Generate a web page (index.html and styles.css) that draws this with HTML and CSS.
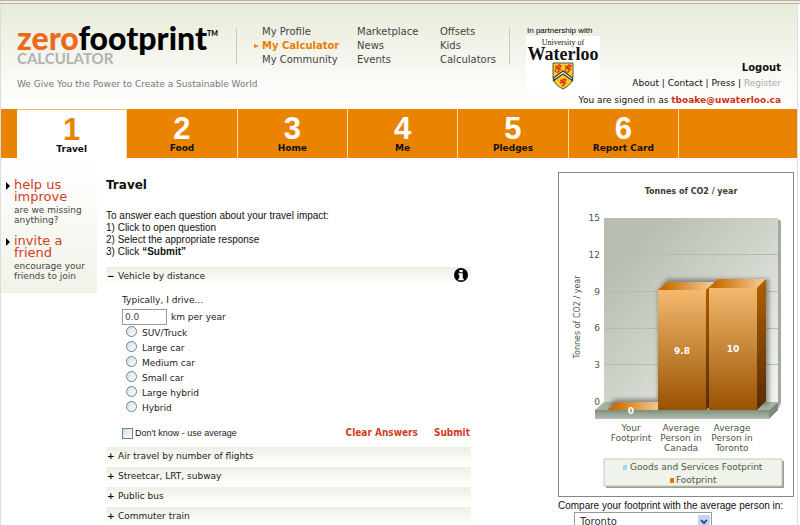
FILE: index.html
```html
<!DOCTYPE html>
<html lang="en">
<head>
<meta charset="utf-8">
<title>Zerofootprint Calculator</title>
<link rel="stylesheet" href="styles.css">
</head>
<body>
<div class="strip"></div>
<div class="page">
  <header class="header">
    <div class="brand">
      <div class="logo"><span class="logo-zero">zero</span>footprint<sup class="tm">TM</sup></div>
      <div class="logo-sub">CALCULATOR</div>
      <p class="tagline">We Give You the Power to Create a Sustainable World</p>
    </div>
    <nav class="links" aria-label="Site">
      <ul>
        <li><a href="#">My Profile</a></li>
        <li class="current"><a href="#">My Calculator</a></li>
        <li><a href="#">My Community</a></li>
      </ul>
      <ul>
        <li><a href="#">Marketplace</a></li>
        <li><a href="#">News</a></li>
        <li><a href="#">Events</a></li>
      </ul>
      <ul>
        <li><a href="#">Offsets</a></li>
        <li><a href="#">Kids</a></li>
        <li><a href="#">Calculators</a></li>
      </ul>
    </nav>
    <div class="partner">
      <p class="partner-note">In partnership with</p>
      <div class="partner-card">
        <span class="uni">University of</span>
        <span class="uni-name">Waterloo</span>
        <svg class="crest" viewBox="0 0 22 28" aria-hidden="true">
          <path d="M1 1H21V14C21 20 17 24 11 27C5 24 1 20 1 14Z" fill="#f7cf1c" stroke="#555" stroke-width="1"/>
          <path d="M1.500 16L11 9L20.500 16V18.500L11 12L1.500 18.500Z" fill="#fff" stroke="#333" stroke-width="1.200"/>
          <path d="M3 4l2 1 2-2 2 1-2 2 2 2M3 7l3-1 1 3-2 2M4 10l-1-2M13 4l2 1 2-2 2 1-2 2 2 2M13 7l3-1 1 3-2 2M14 10l-1-2M8 18l2 1 2-2 2 1-2 2 2 2M8 21l3-1 1 3-2 1" fill="none" stroke="#dc3a20" stroke-width="1.500"/>
        </svg>
      </div>
    </div>
    <div class="account">
      <a class="logout" href="#">Logout</a>
      <p class="account-links"><a href="#">About</a> | <a href="#">Contact</a> | <a href="#">Press</a> | <a class="muted" href="#">Register</a></p>
      <p class="signed">You are signed in as <a href="#">tboake@uwaterloo.ca</a></p>
    </div>
  </header>

  <nav class="tabbar" aria-label="Steps">
    <div class="tabs">
      <a class="tab active" href="#"><span class="num">1</span>Travel</a>
      <a class="tab" href="#"><span class="num">2</span>Food</a>
      <a class="tab" href="#"><span class="num">3</span>Home</a>
      <a class="tab" href="#"><span class="num">4</span>Me</a>
      <a class="tab" href="#"><span class="num">5</span>Pledges</a>
      <a class="tab" href="#"><span class="num">6</span>Report Card</a>
    </div>
  </nav>

  <div class="columns">
    <aside class="side">
      <section class="promo">
        <h2><a href="#">help us improve</a></h2>
        <p>are we missing anything?</p>
      </section>
      <section class="promo">
        <h2><a href="#">invite a friend</a></h2>
        <p>encourage your friends to join</p>
      </section>
    </aside>

    <main class="main">
      <h1>Travel</h1>
      <div class="intro">
        <p>To answer each question about your travel impact:</p>
        <p>1) Click to open question</p>
        <p>2) Select the appropriate response</p>
        <p>3) Click <b>“Submit”</b></p>
      </div>
      <button class="question open" type="button"><span class="sign">−</span>Vehicle by distance
        <svg class="info" viewBox="0 0 14 14" aria-hidden="true"><circle cx="7" cy="7" r="7"/><path d="M5.300 2h3.400v2.200H5.300zM4.300 5.200h4.400v5.300h1v1.700H4.300v-1.700h1V6.800h-1z" fill="#fff"/></svg>
      </button>
      <form class="form">
        <label for="distance">Typically, I drive...</label>
        <div class="distance"><input id="distance" class="amount" type="text" value="0.0"><span>km per year</span></div>
        <div class="choices">
          <label><input type="radio" name="car">SUV/Truck</label>
          <label><input type="radio" name="car">Large car</label>
          <label><input type="radio" name="car">Medium car</label>
          <label><input type="radio" name="car">Small car</label>
          <label><input type="radio" name="car">Large hybrid</label>
          <label><input type="radio" name="car">Hybrid</label>
        </div>
        <div class="actions">
          <label class="unknown"><input type="checkbox">Don't know - use average</label>
          <button type="reset">Clear Answers</button>
          <button type="submit">Submit</button>
        </div>
      </form>
      <div class="questions">
        <button class="question" type="button"><span class="sign">+</span>Air travel by number of flights</button>
        <button class="question" type="button"><span class="sign">+</span>Streetcar, LRT, subway</button>
        <button class="question" type="button"><span class="sign">+</span>Public bus</button>
        <button class="question" type="button"><span class="sign">+</span>Commuter train</button>
      </div>
    </main>

    <aside class="results">
      <svg class="chart" viewBox="0 0 234 323" role="img" aria-label="Tonnes of CO2 per year">
        <defs>
          <linearGradient id="wall" x1="0" y1="0" x2="1" y2="1"><stop offset="0.150" stop-color="#b7bdb1"/><stop offset="1" stop-color="#f1f4ef"/></linearGradient>
          <linearGradient id="front" x1="0" y1="0" x2="0" y2="1"><stop offset="0" stop-color="#f3b96e"/><stop offset="1" stop-color="#995200"/></linearGradient>
          <linearGradient id="flank" x1="0" y1="0" x2="0" y2="1"><stop offset="0" stop-color="#b06000"/><stop offset="1" stop-color="#552c00"/></linearGradient>
          <linearGradient id="cap" x1="0" y1="0" x2="1" y2="0"><stop offset="0.100" stop-color="#c76c00"/><stop offset="1" stop-color="#f8cf9c"/></linearGradient>
          <linearGradient id="base" x1="0" y1="0" x2="0" y2="1"><stop offset="0" stop-color="#7f8e7f"/><stop offset="1" stop-color="#b3c0b0"/></linearGradient>
          <filter id="soft" x="-20%" y="-20%" width="140%" height="140%"><feGaussianBlur stdDeviation="2"/></filter>
        </defs>
        <text class="chart-title" x="132" y="21">Tonnes of CO2 / year</text>
        <path d="M219 46l3 2V230l-3 6z" fill="#a5aaa1"/>
        <rect x="45" y="45" width="174" height="185" fill="url(#wall)"/>
        <path d="M45 81.500H219M45 118.500H219M45 155.500H219M45 191.500H219" stroke="#b1bfa0"/>
        <path d="M36 237L45 229H219L210 237Z" fill="#a8b4a5"/>
        <rect x="36" y="237" width="174" height="9" fill="url(#base)"/>
        <path d="M210 237L219 229V237L210 246Z" fill="#7d8a79"/>
        <path d="M99 118L108 106H210V232H99ZM48 234L56 226H104V234Z" fill="#555" opacity="0.600" filter="url(#soft)"/>
        <path d="M48 237L58 229H104L99 237Z" fill="url(#cap)"/>
        <rect x="99" y="117" width="48" height="120" fill="url(#front)"/>
        <path d="M99 117L108 109H156L147 117Z" fill="url(#cap)"/>
        <path d="M147 117L156 109V229L147 237Z" fill="url(#flank)"/>
        <rect x="150" y="115" width="48" height="122" fill="url(#front)"/>
        <path d="M150 115L159 106H207L198 115Z" fill="url(#cap)"/>
        <path d="M198 115L207 106V228L198 237Z" fill="url(#flank)"/>
        <g class="scale">
          <text x="41" y="48">15</text><text x="41" y="85">12</text><text x="41" y="122">9</text>
          <text x="41" y="158">6</text><text x="41" y="195">3</text><text x="41" y="232">0</text>
        </g>
        <text class="axis-title" x="-144" y="21" transform="rotate(-90)">Tonnes of CO2 / year</text>
        <g class="values"><text x="72" y="241">0</text><text x="123" y="181">9.8</text><text x="174" y="179">10</text></g>
        <g class="names">
          <text x="72" y="258">Your</text><text x="72" y="268">Footprint</text>
          <text x="122" y="258">Average</text><text x="122" y="268">Person in</text><text x="122" y="278">Canada</text>
          <text x="173" y="258">Average</text><text x="173" y="268">Person in</text><text x="173" y="278">Toronto</text>
        </g>
        <rect x="47" y="288" width="178" height="27" fill="#9a9f96"/>
        <rect x="45" y="286" width="178" height="27" fill="#f0f3ec" stroke="#c4cbb8"/>
        <rect x="64" y="292" width="4" height="5" fill="#a9d3f5"/>
        <rect x="111" y="305" width="4" height="5" fill="#e07800"/>
        <text x="71" y="297">Goods and Services Footprint</text><text x="117" y="310">Footprint</text>
      </svg>
      <label class="compare" for="city">Compare your footprint with the average person in:</label>
      <div class="city-box">
        <select id="city"><option>Toronto</option></select>
        <svg class="arrow" viewBox="0 0 12 14" aria-hidden="true"><rect width="12" height="14" rx="1" fill="#c3d3fb"/><path d="M3 5l3 3 3-3" fill="none" stroke="#3c5684" stroke-width="2"/></svg>
      </div>
    </aside>
  </div>
</div>
</body>
</html>
```
FILE: styles.css
```css
* { box-sizing: border-box; margin: 0; padding: 0; }

html, body { height: 100%; overflow: hidden; }

body {
  background: #fff;
  color: #222;
  font: 10px/12px "DejaVu Sans", Verdana, sans-serif;
}

a { color: inherit; text-decoration: none; }
ul { list-style: none; }
button { border: 0; background: none; font: inherit; color: inherit; cursor: pointer; }

.strip {
  height: 4px;
  border-top: 1px solid #b9afa2;
  border-bottom: 1px solid #bdb7a8;
  background: #f0ebdf;
}

.page {
  min-height: 100%;
  margin-right: 2px;
  border: solid #ddd;
  border-width: 0 1px;
}

/* Header */
.header {
  display: flex;
  height: 105px;
  padding-left: 16px;
  background: linear-gradient(#e8ebda, #fff 96%);
}

.brand { width: 219px; padding-top: 14px; }

.logo {
  color: #000;
  font: 900 32px/40px Lato, sans-serif;
  white-space: nowrap;
}
.logo-zero { color: #ea6a1c; }
.tm { font-size: 7px; line-height: 8px; vertical-align: 14px; }

.logo-sub {
  margin-top: -8px;
  color: #b0b1b3;
  font: 700 15px/16px Lato, sans-serif;
}

.tagline { margin-top: 12px; color: #777; font-size: 9px; white-space: nowrap; }

.links {
  display: flex;
  height: 36px;
  margin-top: 24px;
  padding-left: 25px;
  border: solid #c9ccc2;
  border-width: 0 1px;
  width: 274px;
  color: #444;
  line-height: 14px;
}
.links ul { flex: none; margin-top: -3px; width: 83px; }
.links ul:first-child { width: 95px; }
.links ul:last-child { width: 69px; }
.links li { white-space: nowrap; }
.current { position: relative; color: #e87e04; font-weight: bold; }
.current::before {
  content: "";
  position: absolute;
  left: -8px;
  top: 5px;
  border: solid transparent;
  border-width: 2px 0 2px 5px;
  border-left-color: #e87e04;
}

.partner { width: 74px; margin: 21px 0 0 16px; }
.partner-note { padding-left: 1px; color: #000; font: 8px/11px "Liberation Sans", sans-serif; white-space: nowrap; }
.partner-card {
  display: flex;
  flex-direction: column;
  align-items: center;
  height: 56px;
  padding-top: 3px;
  background: #fff;
  color: #111;
  font-family: "Liberation Serif", serif;
}
.uni { font-size: 8px; line-height: 8px; }
.uni-name { font-size: 18px; line-height: 15px; font-weight: bold; }
.crest { width: 22px; height: 28px; }

.account { flex: 1; padding: 58px 16px 0 0; color: #111; text-align: right; white-space: nowrap; }
.logout { display: block; font-weight: bold; }
.account-links { margin-top: 3px; font-size: 9px; }
.muted { color: #aaa; }
.signed { margin-top: 5px; margin-left: -40px; font-size: 9px; }
.signed a { color: #d03018; font-weight: bold; }

/* Step tabs */
.tabbar { padding-left: 16px; background: #ea8400; }
.tabs { display: flex; max-width: 662px; }
.tab {
  flex: 1;
  height: 49px;
  padding-top: 6px;
  border-right: 1px solid #fbdcb0;
  color: #111;
  font-size: 9px;
  font-weight: bold;
  line-height: 10px;
  text-align: center;
}
.num { display: block; color: #fff; font: bold 31px/28px "Liberation Sans", sans-serif; }
.active { background: #fff; border-top: 1px solid #f3b866; }
.active .num { color: #ea8400; }

/* Columns */
.columns { display: flex; align-items: flex-start; }

.side {
  width: 96px;
  height: 135px;
  padding: 21px 0 0 13px;
  background: linear-gradient(#fff, #f1f2e8);
}
.promo { position: relative; margin-bottom: 10px; color: #444; font-size: 9px; line-height: 10px; }
.promo h2 { margin-bottom: 2px; color: #d23c1e; font-size: 13px; font-weight: normal; line-height: 12px; }
.promo::before {
  content: "";
  position: absolute;
  left: -8px;
  top: 3px;
  border: solid transparent;
  border-width: 4px 0 4px 4px;
  border-left-color: #000;
}

.main { width: 365px; margin-left: 9px; padding-top: 20px; }
h1 { font-size: 12px; line-height: 14px; color: #111; }
.intro { margin: 18px 0 9px; color: #111; font: 10px/12px "Liberation Sans", sans-serif; }

.question {
  display: flex;
  align-items: center;
  width: 100%;
  height: 18px;
  background: linear-gradient(#eeefe3, #fff);
  text-align: left;
  font-size: 9px;
}
.sign { width: 12px; padding-left: 1px; color: #000; font-weight: bold; }
.info { width: 14px; height: 14px; margin: -3px 3px 0 auto; }
.questions { display: grid; gap: 2px; }

.form { padding-left: 16px; padding-top: 9px; font-size: 9px; }
.distance { display: flex; align-items: center; gap: 4px; margin-top: 3px; }
.amount {
  width: 45px;
  height: 16px;
  padding: 0 2px;
  border: 1px solid #999;
  color: #444;
  font: 9px/12px "DejaVu Sans", sans-serif;
}
.choices label { display: flex; align-items: center; gap: 5px; height: 15px; padding-left: 4px; }
input[type="radio"], input[type="checkbox"] {
  appearance: none;
  width: 11px;
  height: 11px;
  border: 1px solid #5b86b0;
  background: linear-gradient(135deg, #dcdcd7, #fff);
}
input[type="radio"] { border-radius: 50%; margin-bottom: 3px; }
.actions { display: flex; align-items: center; gap: 16px; margin: 10px 1px 6px 0; height: 16px; }
.unknown {
  display: flex;
  align-items: center;
  gap: 2px;
  margin-right: auto;
  font: 9px/12px "Liberation Sans", sans-serif;
}
.actions button { color: #d23c1e; font: bold 10px/12px "DejaVu Sans Condensed", "DejaVu Sans", sans-serif; }

/* Results */
.results { width: 236px; margin: 14px 3px 0 auto; }
.chart { display: block; width: 100%; border: 1px solid #888; fill: #000; }
.chart text { font-family: "DejaVu Sans", sans-serif; font-size: 9px; fill: #4c5844; }
.chart .chart-title, .chart .axis-title { font-size: 8px; text-anchor: middle; }
.chart .chart-title { font-weight: bold; fill: #34422c; }
.scale text { text-anchor: end; }
.names text { text-anchor: middle; }
.chart .values text { font-weight: bold; text-anchor: middle; fill: #fff; }

.compare { display: block; margin-top: 3px; color: #111; font: 10px/12px "Liberation Sans", sans-serif; white-space: nowrap; }
.city-box { position: relative; width: 138px; margin-left: 16px; }
select {
  appearance: none;
  width: 100%;
  height: 20px;
  padding-left: 5px;
  border: 1px solid #999;
  background: #fff;
  color: #333;
  font: 10px/16px "DejaVu Sans", sans-serif;
}
.arrow { position: absolute; right: 2px; top: 3px; width: 12px; height: 14px; pointer-events: none; }
```
